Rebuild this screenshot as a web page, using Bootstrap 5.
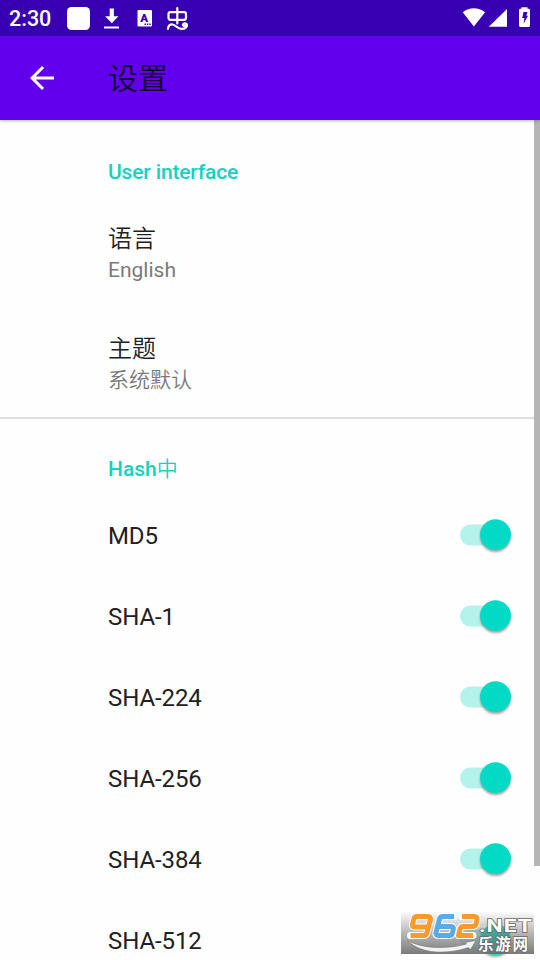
<!DOCTYPE html>
<html lang="zh-CN">
<head>
<meta charset="utf-8">
<meta name="viewport" content="width=device-width, initial-scale=1">
<title>设置</title>
<link href="https://cdn.jsdelivr.net/npm/bootstrap@5.3.0/dist/css/bootstrap.min.css" rel="stylesheet">
<style>
html, body { height: 100%; overflow: hidden; }
body { font-family: Roboto, "Noto Sans CJK SC", sans-serif; color: #212121; background: #fefefe; }
.screen { height: 960px; width: 540px; }
.status { height: 36px; background: #3700b3; }
.status .clock { font-size: 21.5px; font-weight: 500; line-height: 38px; width: 67px; padding-left: 9px; }
.appbar { height: 84px; background: #6200ee; box-shadow: 0 1px 3px rgba(0,0,0,.28); padding-left: 24px; }
.appbar h1 { font-size: 30px; line-height: 36px; font-weight: 350; color: #12032b; margin-left: 48px; padding-top: 2px; }
.settings { height: 840px; }
.section-head { color: #12d3c0; font-size: 21px; font-weight: 500; line-height: 30px; letter-spacing: -.15px; padding: 37px 0 0 108px; height: 79px; }
.section-head.follow { height: 76px; padding-top: 35px; letter-spacing: 0; }
.section-head .han { font-weight: 350; }
.pref { height: 110px; padding: 24px 0 0 108px; }
.pref.last { height: 108px; }
.pref-title { font-size: 24px; line-height: 32px; font-weight: 350; }
.option .pref-title { font-weight: 400; letter-spacing: -.08px; padding-top: 1px; }
.pref-sub { font-size: 21px; line-height: 30px; color: #7a7a7a; }
.pref-sub.han { font-weight: 350; }
.sep { height: 2px; background: #dedede; }
.option { height: 81px; padding-left: 108px; padding-right: 27px; }
.toggle { width: 53px; height: 40px; flex: none; }
.scroll-thumb { right: 0; top: 0; width: 6px; height: 746px; background: #b5b5b5; }
.watermark { left: 401px; top: 911px; width: 133px; height: 43px; }
svg { display: block; }
</style>
<script src="https://cdn.jsdelivr.net/npm/bootstrap@5.3.0/dist/js/bootstrap.bundle.min.js"></script>
</head>
<body>
<div class="screen position-relative overflow-hidden d-flex flex-column">
  <header class="status d-flex text-white flex-shrink-0">
    <span class="clock">2:30</span>
    <svg width="133" height="36" viewBox="67 0 133 36" fill="#fff">
      <rect x="67" y="7" width="23" height="23" rx="4.5"/>
      <path d="M109.700 8.500h4.200v7.700h4.600l-6.700 7-6.700-7h4.600zM104 26.500h15v2h-15z"/>
      <rect x="137.500" y="10" width="14.500" height="16.500" rx="1"/>
      <text x="140.200" y="22" font-size="11.500" font-weight="900" fill="#3700b3">A</text>
      <path d="M144.500 23.500h1.400v1.400h-1.400zm2.400 0h1.400v1.400h-1.400zm2.400 0h1.400v1.400h-1.400z" fill="#3700b3"/>
      <g fill="none" stroke="#fff" stroke-width="2.200" stroke-linecap="round" stroke-linejoin="round">
        <path d="M170.500 12.200h13.500q2 0 2 2v3.600q0 2-2 2h-13.500q-2 0-2-2v-3.600q0-2 2-2zM177.300 8v15.500"/>
        <path d="M168 28.800c.2-3 2-4.600 4.500-4.300 3.500.4 4.500 4.200 9 4.400 4 .1 5.700-2.200 5.500-4-.2-2-3.600-2.200-4.100-.4-.2 1.200 1.200 1.800 2.100 1"/>
      </g>
    </svg>
    <svg class="ms-auto" width="80" height="36" viewBox="460 0 80 36" fill="#fff">
      <path d="M473.900 26.500 462.700 12.300c6.500-5.400 15.900-5.400 22.400 0zM507 9v17.700h-18.200zM521.500 7.200h6v1.600h1.200q1.300 0 1.300 1.300v15.500q0 1.300-1.300 1.300h-8.400q-1.300 0-1.300-1.300V10.100q0-1.300 1.300-1.300h1.200z"/>
      <path fill="#3700b3" d="M523.500 12h4l-1.200 3.800h1.700l-4.400 8 .8-5.800h-2.200z"/>
    </svg>
  </header>
  <nav class="appbar d-flex align-items-center flex-shrink-0 position-relative z-1">
    <svg width="36" height="36" viewBox="0 0 24 24" fill="#fff" role="img" aria-label="返回"><path d="M20 11H7.830l5.590-5.590L12 4l-8 8 8 8 1.410-1.410L7.830 13H20z"/></svg>
    <h1 class="mb-0">设置</h1>
  </nav>
  <main class="settings position-relative">
    <div class="section-head">User interface</div>
    <div class="pref">
      <div class="pref-title">语言</div><div class="pref-sub">English</div>
    </div>
    <div class="pref last">
      <div class="pref-title">主题</div><div class="pref-sub han">系统默认</div>
    </div>
    <div class="sep"></div>
    <div class="section-head follow">Hash<span class="han">中</span></div>
    <div id="options"></div>
    <div class="scroll-thumb position-absolute"></div>
  </main>
  <svg class="watermark position-absolute z-2" viewBox="0 0 133 43">
    <defs>
      <linearGradient id="fade" x1="0" y1="0" x2="0" y2="1"><stop offset="0" stop-color="#777" stop-opacity="0"/><stop offset=".5" stop-color="#777" stop-opacity=".52"/><stop offset="1" stop-color="#6c6c6c" stop-opacity=".9"/></linearGradient>
      <path id="nine" d="M26.500 16H13.500q-2.500 0-2-2.500l1.300-5.500q.5-2.500 3-2.500H27q3 0 2.500 3L26 21.500q-.6 3-3.600 3H9.500"/>
      <path id="six" d="M53 5.500H42q-3 0-3.600 3L35 21.500q-.6 3 2.400 3h11q2.500 0 3-2.500l.9-4q.5-2.500-2-2.500H37"/>
      <path id="two" d="M61 5.500h12.500q3 0 2.500 3l-.8 4q-.6 3-3.600 3H62.500q-3 0-3.600 3l-1.400 6H72"/>
    </defs>
    <rect width="133" height="43" fill="url(#fade)"/>
    <path d="M6.500 29.500C22 38 46 38.500 65.500 33l-1.500-1.500 11-2-5.500 9-2-2C46 43.500 20 43.500 6.500 29.500z" fill="#f4f4f4" stroke="#777" stroke-width=".6"/>
    <g fill="none" stroke="#fff" stroke-width="7" stroke-linejoin="round" stroke-linecap="round">
      <use href="#nine"/><use href="#six"/><use href="#two"/>
    </g>
    <g fill="none" stroke-width="5" stroke-linejoin="round">
      <use href="#nine" stroke="#fb9a2c"/><use href="#six" stroke="#5ba9e5"/><use href="#two" stroke="#fb9a2c"/>
    </g>
    <g fill="#fff" stroke="#686868" stroke-width="1.500" paint-order="stroke" font-weight="700">
      <text transform="translate(78 21) scale(1.2 1)" font-size="19" textLength="44" lengthAdjust="spacing">.NET</text>
      <text x="77" y="38.500" font-size="15.500" textLength="50" font-family="Noto Sans CJK SC, sans-serif">乐游网</text>
    </g>
  </svg>
</div>
<script>
document.getElementById('options').innerHTML = ['MD5', 'SHA-1', 'SHA-224', 'SHA-256', 'SHA-384', 'SHA-512'].map(name =>
  `<div class="option d-flex align-items-center justify-content-between">
    <span class="pref-title">${name}</span>
    <svg class="toggle" viewBox="0 0 53 40" role="img" aria-label="${name}">
      <rect y="8.500" width="47" height="21" rx="10.500" fill="#b3f3ec"/>
      <circle cx="35.500" cy="18.600" r="15.400" fill="#03dac5" style="filter:drop-shadow(0 2px 1.300px rgba(0,0,0,.36))"/>
    </svg>
  </div>`).join('');
</script>
</body>
</html>
